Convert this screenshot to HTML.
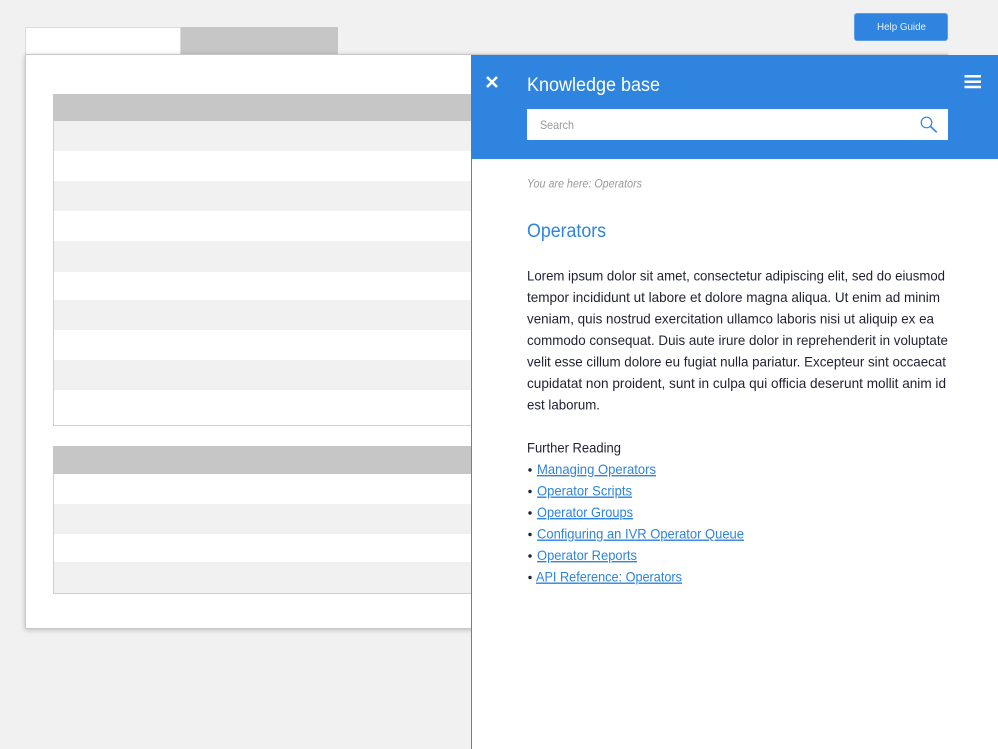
<!DOCTYPE html>
<html><head><meta charset="utf-8"><style>
html,body{margin:0;padding:0;background:#f1f1f1;overflow:hidden}
body{width:998px;height:749px;position:relative}
div{position:absolute;box-sizing:border-box}
svg{position:absolute;left:0;top:0}
text{font-family:"Liberation Sans",sans-serif}
</style></head><body>
<div style="left:25px;top:27px;width:156px;height:28px;background:#fff;border:1px solid #dcdcdc"></div>
<div style="left:181px;top:27px;width:157px;height:28px;background:#c6c6c6"></div>
<div style="left:25px;top:54px;width:923px;height:575px;background:#fff;border:1px solid #c8c8c8;box-shadow:0 1px 5px rgba(0,0,0,.22)"></div>
<div style="left:53px;top:94px;width:420px;height:332px;background:#fff;border:1px solid #cfcfcf"></div>
<div style="left:53px;top:94px;width:420px;height:27px;background:#c6c6c6"></div>
<div style="left:54px;top:121px;width:418px;height:30px;background:#f1f1f1"></div>
<div style="left:54px;top:181px;width:418px;height:30px;background:#f1f1f1"></div>
<div style="left:54px;top:241px;width:418px;height:31px;background:#f1f1f1"></div>
<div style="left:54px;top:300px;width:418px;height:30px;background:#f1f1f1"></div>
<div style="left:54px;top:360px;width:418px;height:30px;background:#f1f1f1"></div>
<div style="left:53px;top:446px;width:420px;height:148px;background:#fff;border:1px solid #cfcfcf"></div>
<div style="left:53px;top:446px;width:420px;height:28px;background:#c6c6c6"></div>
<div style="left:54px;top:504px;width:418px;height:30px;background:#f1f1f1"></div>
<div style="left:54px;top:562px;width:418px;height:31px;background:#f1f1f1"></div>
<div style="left:854px;top:13px;width:94px;height:28px;background:#2e84de;border:1px solid #5a9de6;border-radius:3px"></div>
<div style="left:471px;top:55px;width:527px;height:694px;background:#fff;border-left:1px solid #4a86d8"></div>
<div style="left:471px;top:55px;width:527px;height:104px;background:#2e84de"></div>
<div style="left:527px;top:109px;width:421px;height:31px;background:#fff"></div>
<svg width="998" height="749" viewBox="0 0 998 749">
<text x="877" y="30" font-size="10.5" fill="#e6f0fb" textLength="49" lengthAdjust="spacingAndGlyphs">Help Guide</text>
<path d="M487 77 L497 87 M497 77 L487 87" stroke="#fff" stroke-width="2.6" fill="none"/>
<text x="527" y="91" font-size="19" fill="#fff" textLength="133" lengthAdjust="spacingAndGlyphs">Knowledge base</text>
<path d="M964.500 76.300H981M964.500 81.700H981M964.500 87H981" stroke="#fff" stroke-width="2.500" fill="none"/>
<text x="540" y="129" font-size="12" fill="#999" textLength="34" lengthAdjust="spacingAndGlyphs">Search</text>
<circle cx="926.500" cy="122.500" r="5.300" stroke="#2e84de" stroke-width="1.200" fill="none"/>
<path d="M930.400 126.400L936.800 132.300" stroke="#2e84de" stroke-width="1.600" fill="none"/>
<text x="527" y="187.500" font-size="12" font-style="italic" fill="#999" textLength="115" lengthAdjust="spacingAndGlyphs">You are here: Operators</text>
<text x="527" y="237" font-size="19" fill="#2e84de" textLength="79" lengthAdjust="spacingAndGlyphs">Operators</text>
<g font-size="14" fill="#1f2133">
<text x="527" y="280.500" textLength="418" lengthAdjust="spacingAndGlyphs">Lorem ipsum dolor sit amet, consectetur adipiscing elit, sed do eiusmod</text>
<text x="527" y="302" textLength="413" lengthAdjust="spacingAndGlyphs">tempor incididunt ut labore et dolore magna aliqua. Ut enim ad minim</text>
<text x="527" y="323.500" textLength="407" lengthAdjust="spacingAndGlyphs">veniam, quis nostrud exercitation ullamco laboris nisi ut aliquip ex ea</text>
<text x="527" y="345" textLength="421" lengthAdjust="spacingAndGlyphs">commodo consequat. Duis aute irure dolor in reprehenderit in voluptate</text>
<text x="527" y="366.500" textLength="419" lengthAdjust="spacingAndGlyphs">velit esse cillum dolore eu fugiat nulla pariatur. Excepteur sint occaecat</text>
<text x="527" y="388" textLength="419" lengthAdjust="spacingAndGlyphs">cupidatat non proident, sunt in culpa qui officia deserunt mollit anim id</text>
<text x="527" y="409.500" textLength="73" lengthAdjust="spacingAndGlyphs">est laborum.</text>
<text x="527" y="452.500" textLength="94" lengthAdjust="spacingAndGlyphs">Further Reading</text>
</g>
<g fill="#1f2133"><circle cx="530" cy="470" r="1.700"/><circle cx="530" cy="491.500" r="1.700"/><circle cx="530" cy="513" r="1.700"/><circle cx="530" cy="534.500" r="1.700"/><circle cx="530" cy="556" r="1.700"/><circle cx="530" cy="577.500" r="1.700"/></g>
<g font-size="14" fill="#2e84de" text-decoration="underline">
<text x="537" y="474" textLength="119" lengthAdjust="spacingAndGlyphs">Managing Operators</text>
<text x="537" y="495.500" textLength="95" lengthAdjust="spacingAndGlyphs">Operator Scripts</text>
<text x="537" y="517" textLength="96" lengthAdjust="spacingAndGlyphs">Operator Groups</text>
<text x="537" y="538.500" textLength="207" lengthAdjust="spacingAndGlyphs">Configuring an IVR Operator Queue</text>
<text x="537" y="560" textLength="100" lengthAdjust="spacingAndGlyphs">Operator Reports</text>
<text x="536" y="581.500" textLength="146" lengthAdjust="spacingAndGlyphs">API Reference: Operators</text>
</g>
</svg>
</body></html>
